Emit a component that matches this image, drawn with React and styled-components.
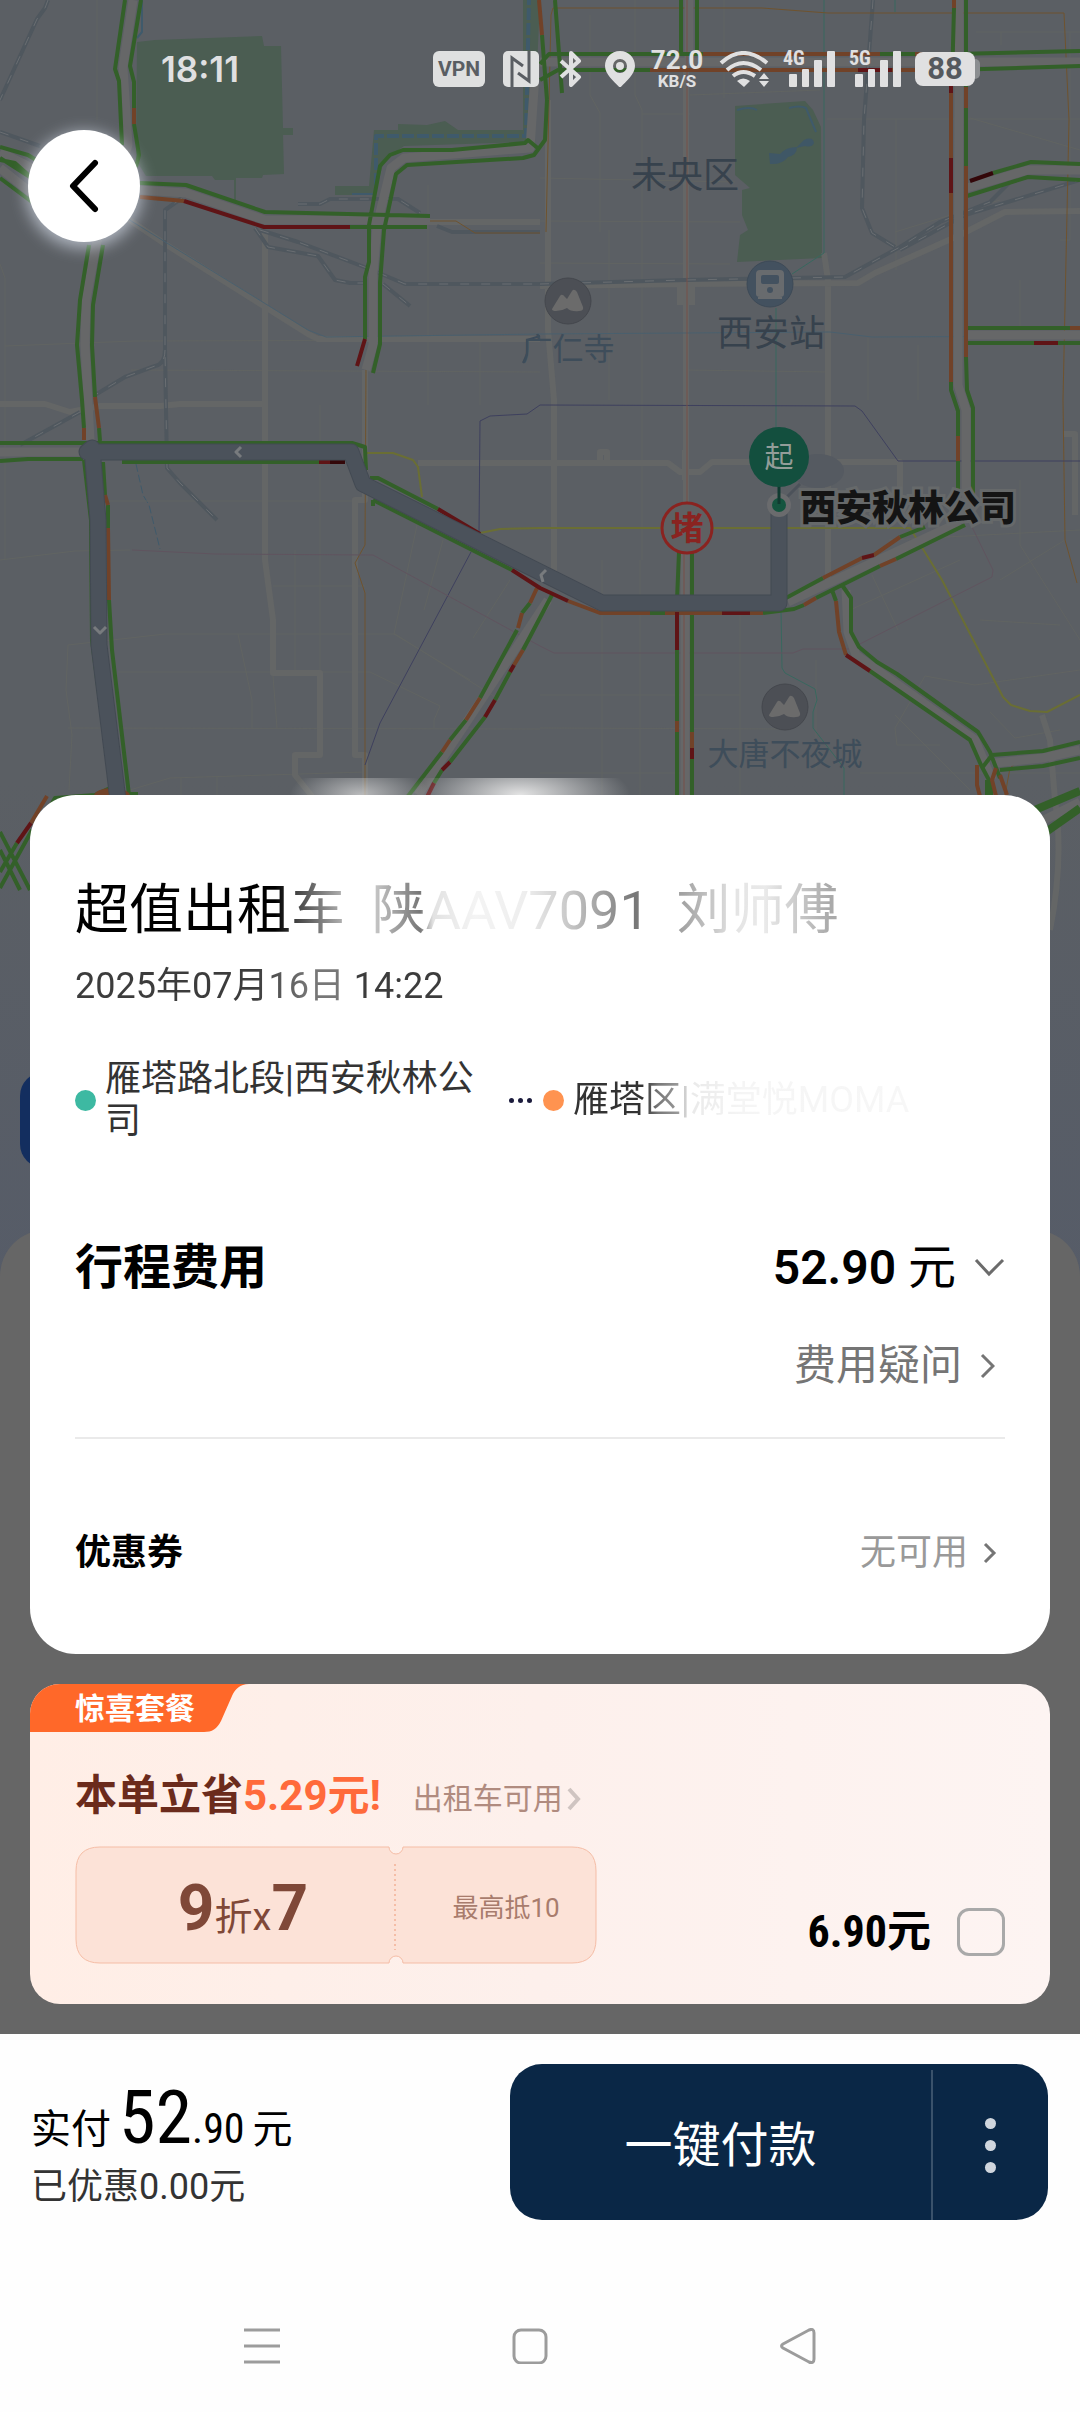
import styled, { createGlobalStyle } from 'styled-components';

const GlobalStyle = createGlobalStyle`
  * {
    box-sizing: border-box;
  }
  body {
    margin: 0;
    background: #666666;
    font-family: Roboto, "Noto Sans CJK SC", sans-serif;
    color: #000;
  }
  button {
    font-family: inherit;
    border: none;
    padding: 0;
    background: none;
    cursor: pointer;
  }
  a {
    color: inherit;
    text-decoration: none;
  }
  svg {
    display: block;
  }
`;

const narrow = '"Liberation Sans Narrow", "Roboto Condensed", Roboto, "Noto Sans CJK SC", sans-serif';
const condensed = '"Roboto Condensed", "Liberation Sans Narrow", Roboto, "Noto Sans CJK SC", sans-serif';

const Page = styled.div`
  position: relative;
  min-height: 100vh;
  display: flex;
  flex-direction: column;
  overflow: hidden;
`;

/* ---------- map ---------- */
const MapSvg = styled.svg`
  position: absolute;
  top: 0;
  left: 0;
  width: 100%;
  height: 1300px;
  z-index: -1;
  font-family: "Noto Sans CJK SC", sans-serif;
  text-anchor: middle;
`;
const Lines = styled.g`
  fill: none;
  stroke: ${(props) => props.$color};
  stroke-width: ${(props) => props.$width || 4};
  stroke-linejoin: round;
  stroke-dasharray: ${(props) => props.$dash || 'none'};
`;

/* ---------- status bar ---------- */
const Header = styled.header`
  flex: 1;
  padding-bottom: 553px;
`;
const StatusBar = styled.div`
  display: flex;
  align-items: center;
  justify-content: space-between;
  height: 36px;
  margin: 51px 98px 43px 161px;
  color: #e0e0e1;
`;
const Clock = styled.div`
  font-family: Inter, sans-serif;
  font-weight: 600;
  font-size: 35px;
  line-height: 36px;
`;
const StatusIcons = styled.div`
  display: flex;
  align-items: center;
  gap: 14px;
`;
const Vpn = styled.div`
  width: 52px;
  border-radius: 6px;
  background: #dfe0e0;
  color: #5a5e63;
  font-weight: 700;
  font-size: 21px;
  line-height: 36px;
  text-align: center;
`;
const Speed = styled.div`
  width: 56px;
  font-weight: 700;
  text-align: center;
`;
const SpeedValue = styled.div`
  font-size: 26px;
  line-height: 24px;
`;
const SpeedUnit = styled.div`
  font-size: 17px;
  line-height: 18px;
`;
const SignalBox = styled.div`
  position: relative;
  width: 52px;
`;
const SignalType = styled.span`
  position: absolute;
  top: 0;
  left: 0;
  font-family: ${narrow};
  font-weight: 700;
  font-size: 20px;
  line-height: 15px;
`;
const Battery = styled.div`
  display: flex;
  align-items: center;
  width: 67px;
`;
const BatteryBody = styled.div`
  width: 60px;
  border-radius: 8px;
  background: #e0e0e1;
  color: #55595e;
  font-weight: 700;
  font-size: 31px;
  line-height: 34px;
  text-align: center;
`;
const BatteryTip = styled.div`
  width: 5px;
  height: 20px;
  border-radius: 0 6px 6px 0;
  background: #8b8e91;
`;
const BackButton = styled.button`
  display: flex;
  align-items: center;
  justify-content: center;
  width: 112px;
  height: 112px;
  margin-left: 28px;
  border-radius: 50%;
  background: #fff;
  box-shadow: 0 4px 16px 2px rgba(215, 222, 235, 0.7);
`;

/* ---------- trip card ---------- */
const Card = styled.section`
  position: relative;
  margin: 0 30px 30px;
  padding: 84px 45px 77px;
  border-radius: 46px;
  background: #fff;
`;
const Haze = styled.div`
  position: absolute;
  top: -17px;
  left: 250px;
  width: 350px;
  height: 17px;
  background:
    radial-gradient(ellipse 70px 30px at 80px 17px, rgba(225, 225, 225, 0.7), transparent),
    radial-gradient(ellipse 110px 40px at 240px 17px, rgba(235, 235, 235, 0.95), transparent);
`;
const Faded = styled.span`
  background: ${(props) => props.$fade};
  background-clip: text;
  -webkit-background-clip: text;
  color: transparent;
`;
const Title = styled.h1`
  margin: 0;
  font-weight: 400;
  font-size: 54px;
  line-height: 64px;
  white-space: pre;
`;
const DateText = styled.div`
  margin-top: 21px;
  font-size: 36px;
  line-height: 44px;
  color: #3c3c3c;
`;
const Route = styled.div`
  display: flex;
  align-items: center;
  margin-top: 50px;
  font-size: 36px;
  line-height: 42px;
  color: #333;
`;
const Stop = styled.div`
  display: flex;
  align-items: center;
  gap: 9px;
  max-width: ${(props) => props.$max};
`;
const StopDot = styled.span`
  flex: none;
  width: 21px;
  height: 21px;
  border-radius: 50%;
  background: ${(props) => props.$color};
`;
const Ellipsis = styled.span`
  display: flex;
  gap: 4px;
  margin: 0 11px 0 4px;
`;
const Point = styled.i`
  width: 5px;
  height: 5px;
  border-radius: 50%;
  background: #1b1b3c;
`;
const Row = styled.div`
  display: flex;
  align-items: center;
  justify-content: space-between;
  margin-top: ${(props) => props.$top};
`;
const RowTitle = styled.h2`
  margin: 0;
  font-weight: 700;
  font-size: ${(props) => (props.$small ? '36px' : '48px')};
  line-height: ${(props) => (props.$small ? '48px' : '60px')};
`;
const FeeToggle = styled.button`
  display: flex;
  align-items: center;
  gap: 18px;
  font-size: 48px;
  line-height: 60px;
  color: #000;

  b {
    font-weight: 600;
  }
`;
const AskLink = styled.a`
  display: flex;
  align-items: center;
  justify-content: flex-end;
  gap: 18px;
  margin-top: 40px;
  padding-right: 10px;
  font-size: 42px;
  line-height: 56px;
  color: #757575;
`;
const Divider = styled.hr`
  height: 2px;
  margin: 43px 0 0;
  border: none;
  background: #eaeaea;
`;
const CouponLink = styled.a`
  display: flex;
  align-items: center;
  gap: 15px;
  padding-right: 8px;
  font-size: 36px;
  line-height: 48px;
  color: #999;
`;

/* ---------- promo ---------- */
const Promo = styled.section`
  margin: 0 30px 30px;
  padding-bottom: 40px;
  border-radius: 30px;
  overflow: hidden;
  background: linear-gradient(90deg, #ffeee6, #fdf0ec 50%, #fdf4f2);
`;
const Tag = styled.div`
  display: flex;
`;
const TagLabel = styled.div`
  height: 48px;
  padding-left: 45px;
  background: #ff6829;
  color: #fff;
  font-weight: 700;
  font-size: 30px;
  line-height: 50px;
`;
const PromoHead = styled.div`
  display: flex;
  align-items: center;
  margin: 36px 45px 22px;
`;
const Saving = styled.div`
  font-weight: 700;
  font-size: 42px;
  line-height: 56px;
  color: #6b2b1c;

  em {
    font-style: normal;
    color: #ff6a3b;
  }
`;
const Usable = styled.a`
  display: flex;
  align-items: center;
  gap: 4px;
  margin-left: 32px;
  padding-top: 6px;
  font-size: 30px;
  line-height: 40px;
  color: #b08b7f;
`;
const PromoBody = styled.div`
  display: flex;
  align-items: flex-end;
  justify-content: space-between;
  margin: 0 45px;
`;
const Ticket = styled.div`
  position: relative;
  display: flex;
  align-items: center;
  width: 522px;
  height: 118px;
`;
const TicketShape = styled.svg`
  position: absolute;
  inset: 0;
`;
const TicketMain = styled.div`
  position: relative;
  width: 320px;
  padding: 16px 0 0 16px;
  text-align: center;
  color: #7f4838;
  font-size: 38px;
  line-height: 76px;

  b {
    font-size: 64px;
  }
`;
const TicketNote = styled.div`
  position: relative;
  flex: 1;
  padding: 6px 0 0 20px;
  text-align: center;
  font-size: 26px;
  line-height: 36px;
  color: #a87c6d;
`;
const Price = styled.label`
  display: flex;
  align-items: center;
  gap: 26px;
  padding-bottom: 8px;
  font-family: ${narrow};
  font-weight: 700;
  font-size: 44px;
  line-height: 48px;
  cursor: pointer;
`;
const Checkbox = styled.input`
  appearance: none;
  width: 48px;
  height: 48px;
  margin: 0;
  border: 3px solid #a9a9a9;
  border-radius: 12px;
`;

/* ---------- footer ---------- */
const Footer = styled.footer`
  background: #fefefe;
  padding: 30px 0 48px;
`;
const PayRow = styled.div`
  display: flex;
  justify-content: space-between;
  padding: 0 32px 0 31px;
`;
const PayInfo = styled.div`
  padding-top: 16px;
`;
const Total = styled.div`
  display: flex;
  align-items: baseline;
  height: 76px;
  font-size: 40px;
  line-height: 76px;
`;
const Yuan = styled.span`
  margin-left: 8px;
`;
const Big = styled.span`
  margin-left: 8px;
  font-family: ${condensed};
  font-weight: 400;
  font-size: 74px;
`;
const Cents = styled.span`
  font-family: ${condensed};
  font-weight: 400;
  font-size: 42px;
`;
const Discount = styled.div`
  margin-top: 9px;
  font-size: 36px;
  line-height: 44px;
  color: #333;
`;
const PayGroup = styled.div`
  display: flex;
  flex: 0 1 538px;
  height: 156px;
  border-radius: 32px;
  overflow: hidden;
  background: #0a2746;
`;
const PayButton = styled.button`
  flex: 1;
  padding-top: 8px;
  font-size: 48px;
  line-height: 60px;
  color: #fff;
`;
const MoreButton = styled.button`
  display: flex;
  flex-direction: column;
  align-items: center;
  justify-content: center;
  gap: 11px;
  width: 117px;
  margin-top: 6px;
  border-left: 2px solid #3a526b;
`;
const MoreDot = styled.i`
  width: 11px;
  height: 11px;
  border-radius: 50%;
  background: #d0d6de;
`;
const NavBar = styled.nav`
  display: flex;
  justify-content: space-between;
  width: 53%;
  margin: 108px auto 0;
  padding-right: 20px;
  box-sizing: content-box;
`;
const NavButton = styled.button`
  width: 36px;
  height: 36px;
`;

const Chevron = ({ w, h, d, color, stroke = 3 }) => (
  <svg width={w} height={h} viewBox={`0 0 ${w} ${h}`} fill="none" stroke={color} strokeWidth={stroke} aria-hidden="true">
    <path d={d} />
  </svg>
);

const Signal = ({ type }) => (
  <SignalBox>
    <SignalType>{type}</SignalType>
    <svg width="52" height="36" fill="#e0e0e1">
      <rect x="6" y="23" width="8" height="13" rx="1" />
      <rect x="19" y="18" width="7" height="18" rx="1" />
      <rect x="31" y="9" width="8" height="27" rx="1" />
      <rect x="44" y="0" width="8" height="36" rx="1" />
    </svg>
  </SignalBox>
);

const Mountain = ({ x, y }) => (
  <g transform={`translate(${x} ${y})`}>
    <circle r="23" fill="#4c4f55" stroke="#44474d" />
    <path d="M-16 8L-8 -5Q-6 -8 -3 -4L-1 -2L4 -10Q6 -13 9 -9L15 6Q16 10 11 10Q3 11 -1 7Q-6 10 -12 10Q-16 10 -16 8Z" fill="#6b6b6b" />
  </g>
);

const CityMap = () => (
  <MapSvg viewBox="0 0 1080 1300" preserveAspectRatio="xMidYMin slice" role="img" aria-label="地图">
    <defs>
      <linearGradient id="ground" x1="0" y1="0" x2="0" y2="1">
        <stop offset="0.6" stopColor="#5b5f64" />
        <stop offset="1" stopColor="#565c68" />
      </linearGradient>
    </defs>
    <rect width="1080" height="1300" fill="url(#ground)" />

    {/* parks and water */}
    <g fill="#4b5d52">
      <path d="M137 42L155 40L262 36L264 46L281 46L283 128H293V135H283L284 174L263 175L262 178H236V200H234V180H215L212 176H146L136 160Z" />
      <path d="M374 130H398V124L427 125L445 121L458 130H523V0H540L534 135L525 142L404 146L384 160L375 195H335V186H369Z" />
      <path d="M735 106L805 101L813 110L821 127L822 258L737 262L740 235L748 230L742 215V190L750 188L735 175Z" />
    </g>
    <g fill="#3f5766">
      <path d="M769 153L780 154Q786 147 797 147Q797 155 788 157Q782 165 770 164Z" />
      <path d="M796 148L804 140Q813 136 814 143Q812 148 805 146Z" />
    </g>
    <Lines $color="#3f5a6b" $width="4" $dash="12 3">
      <path d="M376 185V136H526L529 0" />
    </Lines>
    <Lines $color="#3f5a6b" $width="2">
      <path d="M142 0V32L137 38M352 194H374M737 110Q750 106 757 110M789 108Q800 105 806 108L816 132" />
      <path d="M136 464L143 495L149 505L160 549" strokeDasharray="8 3" strokeWidth="1" />
    </Lines>

    {/* small streets */}
    <Lines $color="#616462" $width="1">
      <path d="M97 0V120M0 264L5 278V560M5 346L135 341L540 340M131 370L540 372M105 501L355 501M0 560L75 551L130 550M68 645L165 634L395 634L500 700M68 645L66 690L72 735L69 790M238 634L252 700V728M118 672L370 672L440 706L434 720V728M68 728L540 729M130 790L170 778L365 772M273 676L277 728M295 550V670M320 405V672M428 185V405M480 340V405M417 525L394 634L470 680M443 540L424 610M510 580L473 638M273 586H365M181 778V795M217 776V795" />
      <path d="M590 15V95L600 113V232M635 0V95L642 110V560M724 0V98M827 119H1080M896 119V270M540 178L735 182M540 221L740 222M540 263L730 264M609 230V400M690 95L820 90M642 114H690M540 281M685 370L830 372M868 338V400M918 345V400M1020 280V335M970 118L1080 150M895 232L1000 200M640 560V795M602 560V795M740 600V795M816 660V770M540 695H740M540 728L790 729M540 773H680M860 773H1080M850 610L960 560M872 575L898 630M889 540L1080 530M1020 480V545L1080 640M1065 540L1000 580M980 620L1060 625M1080 670L975 685L925 676L895 728L897 745H940M895 715L970 790M990 712L1015 738L1060 730M976 32H1080M1001 32V45M1070 32V240H1060" />
    </Lines>
    <Lines $color="#646666" $width="6">
      <path d="M128 219L162 242L308 334L318 339H540M265 230V560L273 620V673H320V755H295V775L315 800M0 404H45L70 412L100 406H160L180 404H265M365 370V500H355V755H365V795M388 222H540M418 463H668L680 472H700L712 462H900V520" />
      <path d="M548 100V330L554 400V580M824 253L828 280V580M540 286L685 284L858 283L875 273L960 235L1005 212L1080 211M686 60V540M1042 715L1050 740L1055 800Q1064 860 1050 930M1063 434H1075V515" />
      <path d="M600 463V452H607V463M685 450V480M680 284V305M692 284V305" />
    </Lines>

    {/* railways */}
    <Lines $color="#4f575e" $width="4">
      <path d="M48 0L45 8L37 19L0 100M0 132L40 146M182 198L165 210V350L167 468L180 483L217 520M165 350Q165 364 155 366L125 377L95 395M80 412L20 445M260 230L298 242L367 268L405 284H540M255 228L268 247L318 256L335 280L350 283H367M298 204H320L330 199H398L420 213M383 284L410 306M437 226L452 232H540" />
      <path d="M873 0L864 120L862 208L872 233L895 247M540 284L685 280L845 277L900 247L940 222L990 202L1010 182M900 250L965 215L1080 180" />
    </Lines>
    <Lines $color="#6a6e72" $width="1" $dash="9 12">
      <path d="M48 0L45 8L37 19L0 100M0 132L40 146M182 198L165 210V350L167 468L180 483L217 520M165 350Q165 364 155 366L125 377L95 395M80 412L20 445M260 230L298 242L367 268L405 284H540M255 228L268 247L318 256L335 280L350 283H367M298 204H320L330 199H398L420 213M383 284L410 306" />
      <path d="M873 0L864 120L862 208L872 233L895 247M540 284L685 280L845 277L900 247L940 222L990 202M900 250L965 215L1080 180" />
    </Lines>

    {/* metro lines */}
    <Lines $color="#4a606e" $width="1">
      <path d="M128 219L162 240L308 330L326 337L540 334L830 332L872 337L1080 336" />
    </Lines>
    <Lines $color="#3d4b5a" $width="2">
      <path d="M523 363L527 354V340L540 336" />
    </Lines>
    <Lines $color="#38685f" $width="1">
      <path d="M824 0V253L792 274M776 308V430M781 610L782 668L785 673L815 689L817 700L813 712V728L844 768V795M895 0V12" />
    </Lines>
    <Lines $color="#6f532e" $width="1">
      <path d="M540 233H475L456 221H385L375 227L373 345L366 366L365 545L355 563L365 593V795M546 232L551 15L553 8H762L828 13H1064L1069 120L1063 400L1065 540L1077 583M1080 750L1020 760L1010 768L1005 795" />
    </Lines>
    <Lines $color="#6a6e34" $width="2">
      <path d="M0 452H83M366 453H393L413 460L418 467L422 497M480 533L500 529L540 528H910L942 580L1003 697L1011 705L1030 711L1047 712L1080 695" />
    </Lines>
    <Lines $color="#3e405e" $width="1">
      <path d="M471 552L380 723L365 765M479 533L480 421L490 416L527 414L540 405L855 406L862 411L898 461H1080" />
    </Lines>
    <Lines $color="#60545f" $width="1">
      <path d="M132 550L215 554L373 555L540 646L554 653H793L803 649H850L992 577L993 570L972 527" />
    </Lines>

    {/* main road beds */}
    <Lines $color="#666768" $width="9">
      <path d="M133 0L123 67L128 145L96 245L86 300L85 345L90 440M0 152L40 172M0 168L40 200M140 190L186 193L265 220H430M536 60L530 148L404 158L391 168L377 225L373 275V345L366 370M540 62H1080M689 0V60M959 0V60L958 385L966 410V520M967 188L1028 170H1080M968 335H1080M0 452H83M685 552V795M788 602L960 522M548 600L418 795M846 590L848 632L856 655L975 740L992 780M995 763L1043 758L1080 750M1040 822L1080 802" />
    </Lines>
    <Lines $color="#765048" $width="1">
      <path d="M687 0V505M684 552V795" />
    </Lines>

    {/* live traffic */}
    <Lines $color="#336029">
      <path d="M125 0L115 69L119 81L122 145M89 245L80 300L77 345L82 400L84 428M141 0L130 66L134 82V108M134 124L139 155L136 167M103 245L93 305L92 345L95 397M99 428L100 441M0 147L28 155L36 160M0 158L30 177M0 178L32 202M0 160L15 163L34 180" />
      <path d="M140 183L186 185L265 212L430 216M350 227H427M540 150L528 140L525 143L452 150H403L390 155L380 166L369 225V262L365 277V339M547 100L545 140L534 155L523 158L407 165L396 174L384 230L380 283V344L373 373" />
      <path d="M542 35L547 100M555 0L562 93M540 64L549 54H703M880 54H915M955 54L1080 51M540 80L558 70H650M950 70L1080 66M681 0V52M697 0V52M954 8L952 82M951 382V390L958 411V436M958 461V495M966 0V87M966 108V166M966 357L967 390L973 408V500M993 173L1031 162L1080 164M967 196L1028 177L1080 180M968 328H1070M968 343H1034M1058 343H1080" />
      <path d="M0 443H352L365 447L366 470M0 461L28 459H83M122 462H319M370 478H378L438 509M373 500V506M373 500L512 570M84 460L91 520L92 640L105 740M103 462L105 495M108 505V528M109 600L112 650L129 795M48 810L55 798L95 795L110 788M125 794H138" />
      <path d="M530 603L522 613M517 630L480 698M466 720L450 740M442 752L405 800M553 593L523 650M510 672L495 700M485 717L450 762M442 770L434 783M679 552L677 600M677 650V721M677 732V795M692 552V732M692 759V795M650 613H665M763 613L794 609L804 605M816 598L880 566M896 559L965 525M786 598L823 578M900 537L925 527" />
      <path d="M832 590L836 601M870 671L970 740L981 765L990 782V795M842 585L851 598V632L859 647L877 662L897 674L978 732L990 752L1000 778M982 768L992 755L1043 751L1080 742M1000 770L1043 766L1080 758M0 832L30 890M0 850L20 890M0 872L17 843M0 888L32 830" />
    </Lines>
    <Lines $color="#336029" $width="8">
      <path d="M1030 812L1080 791M1046 832L1080 808M989 780V800" />
    </Lines>
    <Lines $color="#714228">
      <path d="M134 108V124M84 428V440M95 397L99 428M140 197L184 201M539 0L542 35M703 54H880M915 54H955M650 70H858M892 70H950M954 0V8M951 93V158M951 193V382M958 436V461M966 87V108M966 166V357M1070 328H1080M105 495L108 505M108 528L109 600M537 588L530 603M522 613L518 628M480 698L466 720M450 740L442 752M523 650L514 665M677 721V732M692 732V748M568 601L600 613H650M665 613H722M750 613H763M804 605L816 598M880 566L896 559M823 578L862 558M874 555L900 537M836 601L839 632L846 655M977 765V785L981 800M996 768L992 780L997 800M1000 775L1007 795M47 796L31 823" />
    </Lines>
    <Lines $color="#5f1416">
      <path d="M184 201L264 227H350M365 339L357 366M858 70H892M951 85V93M951 158V193M1034 343H1058M319 462H345M438 509L480 534M512 570L540 588L568 601M514 665L510 672M495 700L485 717M450 762L442 770M434 783L427 797M677 612V650M692 748V759M722 613H750M862 558L874 555M846 655L870 671M106 745L110 780M31 823L17 843" />
    </Lines>
    <Lines $color="#330709">
      <path d="M970 181L993 173M330 462H345" />
    </Lines>
    <ellipse cx="112" cy="796" rx="18" ry="8" fill="#714228" />

    {/* route */}
    <Lines $color="#434a53" $width="17">
      <path d="M779 512V603H602L363 484L351 452H87L92 448L98 520L99 645L118 800" strokeLinecap="round" />
    </Lines>
    <Lines $color="#4b525b" $width="15">
      <path d="M779 512V603H602L363 484L351 452H87L92 448L98 520L99 645L118 800" strokeLinecap="round" />
    </Lines>
    <Lines $color="#787b7e" $width="3">
      <path d="M241 447L236 452L241 457M94 627L100 633L106 627M546 570L541 575L543 582" />
    </Lines>

    {/* places */}
    <g fill="#37424d" fontSize="36">
      <text x="685" y="188">未央区</text>
      <text x="771" y="346">西安站</text>
    </g>
    <g fill="#3e4d5a" fontSize="31">
      <text x="568" y="360">广仁寺</text>
      <text x="785" y="765">大唐不夜城</text>
    </g>
    <Mountain x={568} y={301} />
    <Mountain x={785} y={707} />
    <circle cx="770" cy="284" r="23" fill="#43515f" stroke="#3d4a57" />
    <path d="M760 270H780Q784 270 784 274V294Q784 297 780 297H782V299H758V297H760Q756 297 756 294V274Q756 270 760 270Z" fill="#686b6e" />
    <rect x="761" y="275" width="18" height="9" rx="2" fill="#43515f" />
    <circle cx="770" cy="290" r="3" fill="#43515f" />

    <circle cx="687" cy="528" r="25" fill="#5f6062" stroke="#8a2320" strokeWidth="3" />
    <text x="687" y="540" fontSize="33" fontWeight="700" fill="#8a2320">堵</text>

    <ellipse cx="818" cy="471" rx="26" ry="17" fill="#555a61" />
    <path d="M784 500L800 484" stroke="#4c525a" strokeWidth="3" />
    <circle cx="779" cy="505" r="12" fill="#6a6b6d" />
    <circle cx="779" cy="505" r="7" fill="#14553f" />
    <path d="M779 480V504" stroke="#103a30" strokeWidth="3" />
    <circle cx="779" cy="457" r="30" fill="#134f3e" />
    <text x="779" y="468" fontSize="29" fill="#939d99">起</text>
    <text x="908" y="521" fontSize="36" fontWeight="900" fill="#141414" stroke="#66696a" strokeWidth="6" paintOrder="stroke">西安秋林公司</text>

    {/* sheet sitting behind the cards */}
    <rect x="20" y="1072" width="120" height="96" rx="24" fill="#132e5f" />
    <rect y="1230" width="1080" height="140" rx="46" fill="#666666" />
  </MapSvg>
);

const App = () => {
  return (
    <Page>
      <GlobalStyle />
      <CityMap />

      <Header>
        <StatusBar>
          <Clock>18:11</Clock>
          <StatusIcons>
            <Vpn>VPN</Vpn>
            <svg width="40" height="36" viewBox="-4 0 40 36" fill="none">
              <rect width="36" height="36" rx="5" fill="#dfe0e0" />
              <path d="M9 36V7L20 15M15 22L26 30V0" stroke="#5a5e63" strokeWidth="3" />
            </svg>
            <svg width="30" height="36" viewBox="-6 0 30 36" fill="none" stroke="#e0e0e1" strokeWidth="4" strokeLinejoin="round">
              <path d="M2 10L20 26L12 34V2L20 10L2 26" />
            </svg>
            <svg width="38" height="36" viewBox="-7 0 38 36">
              <path fillRule="evenodd" fill="#e0e0e1" d="M16 0C7 0 1 7 1 15C1 24 11 31 16 37C21 31 31 24 31 15C31 7 25 0 16 0ZM16 8A7 7 0 1 1 16 22A7 7 0 1 1 16 8Z" />
              <circle cx="16" cy="15" r="4" fill="#e0e0e1" />
            </svg>
            <Speed>
              <SpeedValue>72.0</SpeedValue>
              <SpeedUnit>KB/S</SpeedUnit>
            </Speed>
            <svg width="50" height="36" fill="none" stroke="#e0e0e1" strokeWidth="4">
              <path d="M2 12Q24 -8 48 12M8 19Q24 5 42 19M14 25Q24 17 36 25" />
              <path d="M18 30Q24 25 31 30L25 36Z" fill="#e0e0e1" stroke="none" />
              <path d="M40 28L45 22L50 28ZM40 30H50L45 36Z" fill="#e0e0e1" stroke="none" />
            </svg>
            <Signal type="4G" />
            <Signal type="5G" />
            <Battery>
              <BatteryBody>88</BatteryBody>
              <BatteryTip />
            </Battery>
          </StatusIcons>
        </StatusBar>
        <BackButton aria-label="返回">
          <svg width="112" height="112" fill="none" stroke="#000" strokeWidth="6" strokeLinecap="round" strokeLinejoin="round">
            <path d="M67 33L45 56L67 79" />
          </svg>
        </BackButton>
      </Header>

      <Card>
        <Haze />
        <Title>
          <Faded $fade="linear-gradient(90deg, #000 200px, #444 222px, #aaa 265px, #ccc 296px, #777 345px, #e2e2e2 358px, #f4f4f4 400px, #eee 450px, #ccc 490px, #777 560px, #a5a5a5 610px, #e4e4e4 660px, #eaeaea 690px, #aaa 755px)">超值出租车  陕AAV7091  刘师傅</Faded>
        </Title>
        <DateText>
          <Faded $fade="linear-gradient(90deg, #3c3c3c 180px, #777 235px, #777 265px, #3c3c3c 275px)">2025年07月16日 14:22</Faded>
        </DateText>
        <Route>
          <Stop $max="430px">
            <StopDot $color="#3db9a2" />
            <span>雁塔路北段|西安秋林公司</span>
          </Stop>
          <Ellipsis>
            <Point />
            <Point />
            <Point />
          </Ellipsis>
          <Stop>
            <StopDot $color="#ff9350" />
            <Faded $fade="linear-gradient(90deg, #333 70px, #777 85px, #999 105px, #e9e9e9 116px, #f5f5f5 170px, #f7f7f7)">雁塔区|满堂悦MOMA</Faded>
          </Stop>
        </Route>

        <Row $top="96px">
          <RowTitle>行程费用</RowTitle>
          <FeeToggle>
            <span><b>52.90</b> 元</span>
            <Chevron w={31} h={20} d="M2 2L15 16L29 2" color="#6b6b6b" />
          </FeeToggle>
        </Row>
        <AskLink href="#question">
          费用疑问
          <Chevron w={15} h={26} d="M2 2L13 13L2 24" color="#757575" />
        </AskLink>
        <Divider />
        <Row $top="90px">
          <RowTitle $small>优惠券</RowTitle>
          <CouponLink href="#coupons">
            无可用
            <Chevron w={14} h={22} d="M2 2L11 11L2 20" color="#757575" />
          </CouponLink>
        </Row>
      </Card>

      <Promo>
        <Tag>
          <TagLabel>惊喜套餐</TagLabel>
          <svg width="54" height="48" fill="#ff6829">
            <path d="M0 0H54C45 0 40 5 37 12L26 37C22 45 17 48 9 48H0Z" />
          </svg>
        </Tag>
        <PromoHead>
          <Saving>本单立省<em>5.29元!</em></Saving>
          <Usable href="#usable">
            出租车可用
            <Chevron w={14} h={24} d="M2 2L11 12L2 22" color="#cfc4c1" stroke={4} />
          </Usable>
        </PromoHead>
        <PromoBody>
          <Ticket>
            <TicketShape width="522" height="118" fill="#fce2d7" stroke="#f5bda6">
              <path d="M25 1H314A7 7 0 0 0 328 1H497Q521 1 521 25V93Q521 117 497 117H328A7 7 0 0 0 314 117H25Q1 117 1 93V25Q1 1 25 1Z" />
              <path d="M320 18V104" strokeWidth="2" strokeDasharray="2 3" />
            </TicketShape>
            <TicketMain><b>9</b>折x<b>7</b></TicketMain>
            <TicketNote>最高抵10</TicketNote>
          </Ticket>
          <Price>
            6.90元
            <Checkbox type="checkbox" />
          </Price>
        </PromoBody>
      </Promo>

      <Footer>
        <PayRow>
          <PayInfo>
            <Total>
              实付<Big>52</Big><Cents>.90</Cents><Yuan>元</Yuan>
            </Total>
            <Discount>已优惠0.00元</Discount>
          </PayInfo>
          <PayGroup>
            <PayButton>一键付款</PayButton>
            <MoreButton aria-label="更多付款方式">
              <MoreDot />
              <MoreDot />
              <MoreDot />
            </MoreButton>
          </PayGroup>
        </PayRow>
        <NavBar>
          <NavButton aria-label="任务">
            <svg width="36" height="36" stroke="#9c9c9c" strokeWidth="3">
              <path d="M0 2H36M0 18H36M0 34H36" />
            </svg>
          </NavButton>
          <NavButton aria-label="主页">
            <svg width="36" height="36" fill="none" stroke="#9c9c9c" strokeWidth="3">
              <rect x="2" y="2" width="32" height="33" rx="7" />
            </svg>
          </NavButton>
          <NavButton aria-label="后退">
            <svg width="36" height="36" fill="none" stroke="#9c9c9c" strokeWidth="3">
              <path d="M3 16L29 2Q34 0 34 5V31Q34 36 29 34L3 20Q0 18 3 16Z" />
            </svg>
          </NavButton>
        </NavBar>
      </Footer>
    </Page>
  );
};

export default App;
